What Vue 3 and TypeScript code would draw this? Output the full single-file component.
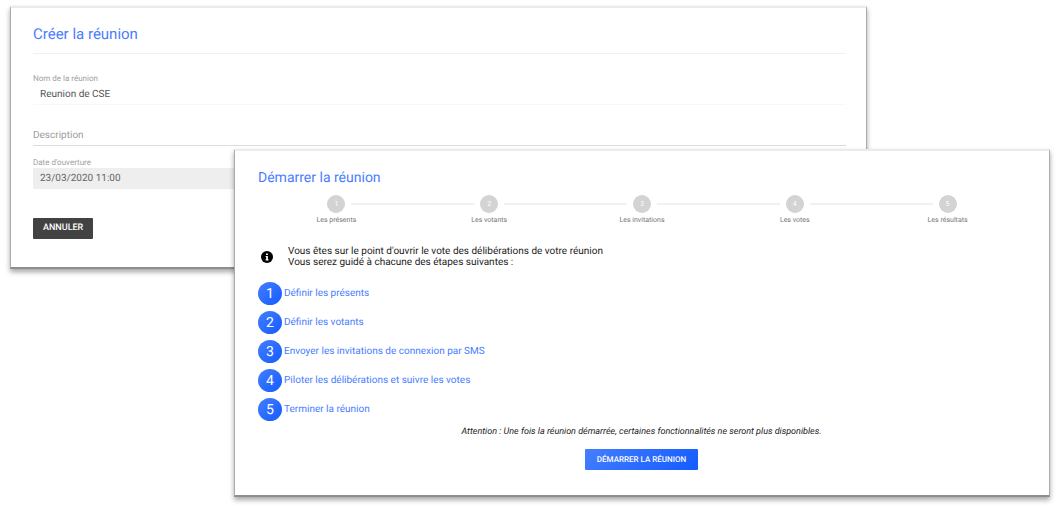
<script setup lang="ts">
import { ref } from 'vue'

const meetingName = ref<string>('Reunion de CSE')
const description = ref<string>('')
const openingDate = ref<string>('23/03/2020 11:00')

const phases: string[] = ['Les présents', 'Les votants', 'Les invitations', 'Les votes', 'Les résultats']

const tasks: string[] = [
  'Définir les présents',
  'Définir les votants',
  'Envoyer les invitations de connexion par SMS',
  'Piloter les délibérations et suivre les votes',
  'Terminer la réunion',
]
</script>

<template>
  <main class="page">
    <form class="card create" @submit.prevent>
      <h1 class="title">Créer la réunion</h1>
      <hr class="rule" />
      <div class="field name">
        <label for="name">Nom de la réunion</label>
        <input id="name" v-model="meetingName" type="text" />
      </div>
      <div class="field description">
        <input v-model="description" type="text" placeholder="Description" aria-label="Description" />
      </div>
      <div class="field date">
        <label for="date">Date d'ouverture</label>
        <input id="date" v-model="openingDate" type="text" readonly />
      </div>
      <button class="button cancel" type="button">ANNULER</button>
    </form>

    <section class="card start">
      <h2 class="title">Démarrer la réunion</h2>
      <ol class="stepper">
        <li v-for="(phase, i) in phases" :key="phase" class="phase">
          <span class="dot">{{ i + 1 }}</span>
          <span class="phase-name">{{ phase }}</span>
        </li>
      </ol>
      <div class="notice">
        <svg class="info" viewBox="0 0 12 12" aria-hidden="true">
          <circle cx="6" cy="6" r="6" fill="#000" />
          <path d="M5.1 2.6h1.8v1.5H5.1zM4.7 5.1h2.2v3.2h.6v1.1H4.6V8.3h.6V6.1h-.5z" fill="#fff" />
        </svg>
        <p>
          Vous êtes sur le point d'ouvrir le vote des délibérations de votre réunion<br />
          Vous serez guidé à chacune des étapes suivantes :
        </p>
      </div>
      <ol class="tasks">
        <li v-for="(task, i) in tasks" :key="task">
          <span class="number">{{ i + 1 }}</span>
          <span>{{ task }}</span>
        </li>
      </ol>
      <p class="warning">
        Attention : Une fois la réunion démarrée, certaines fonctionnalités ne seront plus disponibles.
      </p>
      <button class="button launch" type="button">DÉMARRER LA RÉUNION</button>
    </section>
  </main>
</template>

<style>
body {
  margin: 0;
  background: #fff;
}
</style>

<style scoped>
.page {
  padding: 6px 8px 10px 10px;
  font-family: Roboto, "Liberation Sans", sans-serif;
  font-size: 10px;
  line-height: 11px;
  color: #222;
  text-rendering: geometricPrecision;
}

.card {
  box-sizing: border-box;
  display: flex;
  flex-direction: column;
  background: #fff;
  border: 1px solid #ababab;
  border-top: 2px solid #ebebeb;
  border-bottom: 2px solid #8e8e8e;
  box-shadow: 0 3px 5px rgba(0, 0, 0, 0.35);
}

.create {
  margin-right: 183px;
  padding: 16px 20px 28px 22px;
}

.start {
  position: relative;
  margin: -120px 0 0 224px;
  padding: 17px 24px 25px 23px;
}

.title {
  margin: 0;
  font-size: 14px;
  line-height: 20px;
  font-weight: 400;
  color: #4a7dff;
}

.create .title {
  font-size: 15px;
}

.rule {
  width: 100%;
  height: 1px;
  margin: 9px 0 0;
  border: 0;
  background: #f0f0f0;
}

.field {
  display: flex;
  flex-direction: column;
}

.field label {
  font-size: 8px;
  line-height: 10px;
  color: #a0a0a0;
}

.field input {
  box-sizing: border-box;
  width: 100%;
  height: 21px;
  padding: 0 7px;
  border: 0;
  border-radius: 0;
  outline: 0;
  background: transparent;
  font: inherit;
  color: #555;
  text-rendering: inherit;
}

.name {
  margin-top: 20px;
}

.name input {
  border-bottom: 1px solid #f8f8f8;
}

.description {
  margin-top: 20px;
}

.description input {
  padding: 0;
  border-bottom: 1px solid #dcdcdc;
}

.description input::placeholder {
  color: #9c9c9c;
  opacity: 1;
}

.date {
  margin-top: 12px;
}

.date input {
  background: #eee;
  color: #666;
}

.button {
  height: 21px;
  padding: 0 10px;
  border: 0;
  border-radius: 1px;
  font: inherit;
  font-weight: 500;
  font-size: 9px;
  color: #fff;
  text-rendering: inherit;
}

.cancel {
  align-self: flex-start;
  margin-top: 29px;
  background: #424242;
}

.launch {
  align-self: center;
  margin-top: 11px;
  padding: 0 12px;
  background: linear-gradient(135deg, #447eff, #145cff);
  font-size: 8px;
}

.stepper {
  display: flex;
  margin: 7px 1px 0 2px;
  padding: 0;
  list-style: none;
}

.phase {
  position: relative;
  flex: 1;
  display: flex;
  flex-direction: column;
  align-items: center;
}

.phase:not(:last-child)::after {
  content: "";
  position: absolute;
  top: 8px;
  left: calc(50% + 15px);
  width: calc(100% - 30px);
  height: 2px;
  background: #f1f1f1;
}

.dot {
  width: 18px;
  height: 18px;
  border-radius: 50%;
  background: #d3d3d3;
  font-size: 7px;
  line-height: 18px;
  text-align: center;
  color: #fff;
}

.phase-name {
  margin-top: 2px;
  font-size: 7px;
  line-height: 10px;
  color: #777;
}

.notice {
  display: flex;
  align-items: center;
  gap: 15px;
  margin: 21px 0 0 3px;
}

.notice p {
  margin: 0;
}

.info {
  width: 12px;
  height: 12px;
}

.tasks {
  display: flex;
  flex-direction: column;
  gap: 6px;
  margin: 14px 0 0;
  padding: 0;
  list-style: none;
  color: #4a7dff;
}

.tasks li {
  display: flex;
  align-items: center;
  gap: 2px;
}

.number {
  width: 24px;
  height: 23px;
  border-radius: 50%;
  background: linear-gradient(135deg, #447eff, #145cff);
  font-size: 14px;
  line-height: 24px;
  text-align: center;
  color: #fff;
}

.warning {
  margin: 6px 0 0;
  font-size: 9px;
  font-style: italic;
  text-align: center;
}
</style>
